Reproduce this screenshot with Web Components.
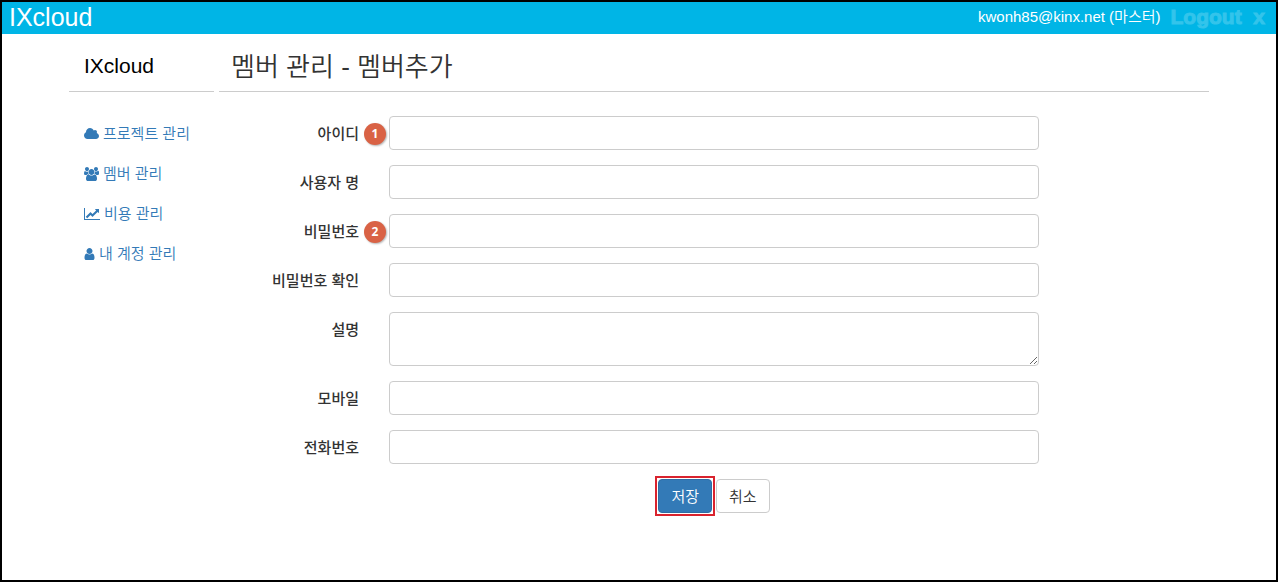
<!DOCTYPE html>
<html lang="ko">
<head>
<meta charset="utf-8">
<meta name="viewport" content="width=device-width, initial-scale=1">
<title>IXcloud</title>
<style>
    * {
        box-sizing: border-box;
    }
    body {
        margin: 0;
        min-height: 100vh;
        border: 2px solid #000;
        background: #fff;
        color: #333;
        font: 350 15px/20px "Liberation Sans", "Noto Sans CJK KR", sans-serif;
    }
</style>
</head>
<body>
<member-page></member-page>

<script>
class BaseElement extends HTMLElement {
    constructor() {
        super();
        this.attachShadow({mode: "open"});
    }

    connectedCallback() {
        const template = document.createElement("template");
        template.innerHTML = `
            <style>* { box-sizing: border-box; }</style>
            ${this.getStyles()}
            ${this.getTemplate()}
        `;
        this.shadowRoot.replaceChildren(template.content.cloneNode(true));
    }
}

class TopBar extends BaseElement {
    getTemplate() {
        return `
            <a class="brand" href="#">IXcloud</a>
            <span class="user"><slot></slot></span>
            <button type="button">Logout&nbsp; x</button>
        `;
    }

    getStyles() {
        return `
        <style>
            :host {
                display: flex;
                align-items: center;
                height: 32px;
                padding: 0 11px 3px 7px;
                background: #00b5e6;
                color: #fff;
            }
            .brand {
                margin-right: auto;
                color: #fff;
                font-size: 25px;
                line-height: 28px;
                text-decoration: none;
            }
            .user {
                line-height: 28px;
            }
            button {
                margin-left: 10px;
                padding: 0;
                border: 0;
                background: none;
                color: #33c4eb;
                font: bold 21px/28px "Liberation Sans", sans-serif;
                -webkit-text-stroke: 1px #33c4eb;
                cursor: pointer;
            }
        </style>
        `;
    }
}

const ICONS = {
    cloud: {
        width: 1920,
        path: "M1920 1152q0 159-112.5 271.5t-271.5 112.5h-1088q-185 0-316.5-131.5t-131.5-316.5q0-132 71-241.5t187-163.5q-2-28-2-43 0-212 150-362t362-150q158 0 286.5 88t187.5 230q70-62 166-62 106 0 181 75t75 181q0 75-41 138 129 30 213 134.5t84 239.5z"
    },
    users: {
        width: 1920,
        path: "M593 896q-162 5-265 128h-134q-82 0-138-40.5t-56-118.5q0-353 124-353 6 0 43.5 21t97.5 42.5 119 21.5q67 0 133-23-5 37-5 66 0 159 93 293zm1071 637q0 120-73 189.5t-194 69.5h-874q-121 0-194-69.5t-73-189.5q0-53 3.5-103.5t14-109 26.5-108.5 43-97.5 62-81 85.5-53.5 111.5-20q10 0 43 21.5t73 48 107 48 135 21.5 135-21.5 107-48 73-48 43-21.5q61 0 111.5 20t85.5 53.5 62 81 43 97.5 26.5 108.5 14 109 3.5 103.5zm-1024-1277q0 106-75 181t-181 75-181-75-75-181 75-181 181-75 181 75 75 181zm704 384q0 159-112.5 271.5t-271.5 112.5-271.5-112.5-112.5-271.5 112.5-271.5 271.5-112.5 271.5 112.5 112.5 271.5zm576 225q0 78-56 118.5t-138 40.5h-134q-103-123-265-128 93-134 93-293 0-29-5-66 66 23 133 23 59 0 119-21.5t97.5-42.5 43.5-21q124 0 124 353zm-128-609q0 106-75 181t-181 75-181-75-75-181 75-181 181-75 181 75 75 181z"
    },
    chart: {
        width: 2048,
        path: "M2048 1536v128h-2048v-1536h128v1408h1920zm-128-1248v435q0 21-19.5 29.5t-35.5-7.5l-121-121-633 633q-10 10-23 10t-23-10l-233-233-416 416-192-192 585-585q10-10 23-10t23 10l233 233 464-464-121-121q-16-16-7.5-35.5t29.5-19.5h435q14 0 23 9t9 23z"
    },
    user: {
        width: 1280,
        path: "M1280 1399q0 109-62.5 187t-150.5 78h-854q-88 0-150.5-78t-62.5-187q0-85 8.5-160.5t31.5-152 58.5-131 94-89 134.5-34.5q131 128 313 128t313-128q76 0 134.5 34.5t94 89 58.5 131 31.5 152 8.5 160.5zm-256-887q0 159-112.5 271.5t-271.5 112.5-271.5-112.5-112.5-271.5 112.5-271.5 271.5-112.5 271.5 112.5 112.5 271.5z"
    }
};

class NavItem extends BaseElement {
    getTemplate() {
        const icon = ICONS[this.getAttribute("icon")];
        return `
            <a href="#">
                <svg viewBox="0 0 ${icon.width} 1792" aria-hidden="true"><path d="${icon.path}"/></svg>
                <slot></slot>
            </a>
        `;
    }

    getStyles() {
        return `
        <style>
            :host {
                display: block;
            }
            a {
                display: flex;
                align-items: center;
                gap: 4px;
                padding: 10px 0;
                color: #337ab7;
                text-decoration: none;
                white-space: nowrap;
            }
            svg {
                min-width: 11px;
                height: 14px;
                fill: currentColor;
            }
        </style>
        `;
    }
}

class SideMenu extends BaseElement {
    getTemplate() {
        return `
            <h2>IXcloud</h2>
            <nav><slot></slot></nav>
        `;
    }

    getStyles() {
        return `
        <style>
            :host {
                display: block;
            }
            h2 {
                margin: 0;
                padding: 20px 15px 13px;
                border-bottom: 1px solid #ccc;
                color: #000;
                font-size: 21px;
                font-weight: normal;
                line-height: 24px;
            }
            nav {
                padding: 22px 15px;
            }
        </style>
        `;
    }
}

class StepBadge extends BaseElement {
    getTemplate() {
        return `<slot></slot>`;
    }

    getStyles() {
        return `
        <style>
            :host {
                display: block;
                width: 22px;
                height: 22px;
                border-radius: 50%;
                background: #d96245;
                box-shadow: 1px 1px 2px rgba(0, 0, 0, .3);
                color: #fff;
                font: bold 12px/22px "Open Sans", sans-serif;
                text-align: center;
            }
        </style>
        `;
    }
}

class FormField extends BaseElement {
    getTemplate() {
        const type = this.getAttribute("type") || "text";
        const control = type === "textarea"
            ? `<textarea id="control"></textarea>`
            : `<input id="control" type="${type}">`;
        return `
            <label for="control">${this.getAttribute("label")}</label>
            <div class="mark"><slot></slot></div>
            ${control}
        `;
    }

    getStyles() {
        return `
        <style>
            :host {
                display: grid;
                grid-template-columns: 140px 30px minmax(0, 1fr);
            }
            label {
                padding: 8px 0 6px;
                font-weight: 500;
                text-align: right;
            }
            .mark {
                display: flex;
                align-items: flex-start;
                justify-content: flex-end;
                padding: 7px 3px 0;
            }
            input, textarea {
                display: block;
                width: 100%;
                height: 34px;
                margin: 0;
                padding: 6px 12px;
                border: 1px solid #ccc;
                border-radius: 4px;
                background: #fff;
                color: #555;
                font: inherit;
            }
            textarea {
                height: 54px;
                resize: vertical;
            }
        </style>
        `;
    }
}

class ActionButton extends BaseElement {
    getTemplate() {
        return `<button type="button"><slot></slot></button>`;
    }

    getStyles() {
        return `
        <style>
            :host {
                display: block;
            }
            button {
                display: block;
                height: 34px;
                padding: 7px 12px 5px;
                border: 1px solid #ccc;
                border-radius: 4px;
                background: #fff;
                color: #333;
                font: inherit;
                cursor: pointer;
            }
            :host([primary]) button {
                border-color: #2e6da4;
                background: #337ab7;
                color: #fff;
            }
            :host([highlight]) {
                outline: 2px solid #d9232e;
                outline-offset: 1px;
            }
        </style>
        `;
    }
}

class MemberPage extends BaseElement {
    getTemplate() {
        return `
            <top-bar>kwonh85@kinx.net (마스터)</top-bar>
            <div class="container">
                <side-menu>
                    <nav-item icon="cloud">프로젝트 관리</nav-item>
                    <nav-item icon="users">멤버 관리</nav-item>
                    <nav-item icon="chart">비용 관리</nav-item>
                    <nav-item icon="user">내 계정 관리</nav-item>
                </side-menu>
                <main>
                    <h1>멤버 관리 - 멤버추가</h1>
                    <form>
                        <form-field label="아이디"><step-badge>1</step-badge></form-field>
                        <form-field label="사용자 명"></form-field>
                        <form-field label="비밀번호" type="password"><step-badge>2</step-badge></form-field>
                        <form-field label="비밀번호 확인" type="password"></form-field>
                        <form-field label="설명" type="textarea"></form-field>
                        <form-field label="모바일" type="tel"></form-field>
                        <form-field label="전화번호" type="tel"></form-field>
                        <div class="actions">
                            <action-button primary highlight>저장</action-button>
                            <action-button>취소</action-button>
                        </div>
                    </form>
                </main>
            </div>
        `;
    }

    getStyles() {
        return `
        <style>
            :host {
                display: block;
            }
            .container {
                display: grid;
                grid-template-columns: 145px minmax(0, 1fr);
                gap: 5px;
                max-width: 1140px;
                margin: 0 auto;
            }
            h1 {
                margin: 0;
                padding: 17px 12px 8px;
                border-bottom: 1px solid #ccc;
                font-size: 26px;
                font-weight: 350;
                line-height: 32px;
            }
            form {
                display: flex;
                flex-direction: column;
                gap: 15px;
                padding: 24px 170px 24px 0;
            }
            .actions {
                display: flex;
                justify-content: center;
                gap: 4px;
                padding-left: 170px;
            }
        </style>
        `;
    }
}

customElements.define("top-bar", TopBar);
customElements.define("nav-item", NavItem);
customElements.define("side-menu", SideMenu);
customElements.define("step-badge", StepBadge);
customElements.define("form-field", FormField);
customElements.define("action-button", ActionButton);
customElements.define("member-page", MemberPage);
</script>
</body>
</html>
